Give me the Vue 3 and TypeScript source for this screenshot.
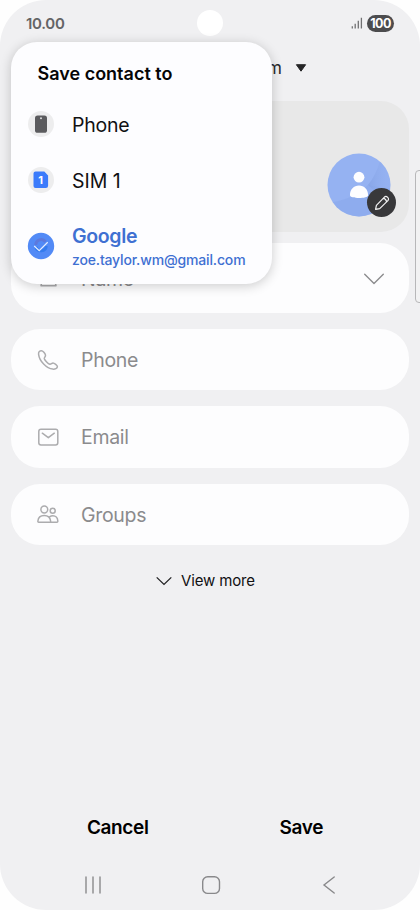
<script setup lang="ts">
interface Field {
  id: 'phone' | 'email' | 'groups'
  label: string
}

interface Target {
  id: 'phone' | 'sim' | 'google'
  label: string
  account?: string
}

const account = 'zoe.taylor.wm@gmail.com'

const targets: Target[] = [
  { id: 'phone', label: 'Phone' },
  { id: 'sim', label: 'SIM 1' },
  { id: 'google', label: 'Google', account },
]

const fields: Field[] = [
  { id: 'phone', label: 'Phone' },
  { id: 'email', label: 'Email' },
  { id: 'groups', label: 'Groups' },
]
</script>

<template>
  <div class="screen">
    <header class="status">
      <span class="time">10.00</span>
      <span class="camera"></span>
      <div class="indicators">
        <svg class="signal" width="12" height="12" viewBox="0 0 12 12">
          <path d="M1.3 9.2v2.3M4.2 6.8v4.7M7.3 3.8v7.7M10.4 .8v10.7" />
        </svg>
        <span class="battery">100</span>
      </div>
    </header>

    <div class="account">
      <span class="account-name">{{ account }}</span>
      <svg width="12" height="8" viewBox="0 0 12 8"><path d="M1.4 .7h9.2L6 7.2z" fill="#252527" stroke="#252527" stroke-linejoin="round" /></svg>
    </div>

    <main class="form">
      <section class="photo">
        <div class="avatar">
          <svg class="portrait" width="64" height="64" viewBox="0 0 64 64">
            <defs>
              <clipPath id="disc"><circle cx="32" cy="32" r="31.5" /></clipPath>
              <linearGradient id="fold" x1="0" y1="0" x2="1" y2="0">
                <stop offset="0" stop-color="#84a2e5" stop-opacity=".75" />
                <stop offset="1" stop-color="#95b2f2" stop-opacity=".2" />
              </linearGradient>
            </defs>
            <g clip-path="url(#disc)">
              <rect width="64" height="64" fill="#95b2f2" />
              <path d="M0 50Q26 47 41 32L64 36V64H0z" fill="#8aa8eb" opacity=".6" />
              <path d="M41 32Q49 22 53 8L64 8V52z" fill="url(#fold)" />
            </g>
            <circle cx="32" cy="24.2" r="5.4" fill="#fdfdff" />
            <path d="M23 42.2c0-5.6 3.8-9.6 9-9.6s9.1 4 9.1 9.6c0 3.7-18.1 3.7-18.1 0z" fill="#fdfdff" />
          </svg>
          <span class="edit">
            <svg width="18" height="18" viewBox="0 0 18 18">
              <path d="M2.6 15.4l.8-4.1 8-8.2a2.1 2.1 0 0 1 3 0l.5.5a2.1 2.1 0 0 1 0 3l-8.2 8zM10.2 4.4q2.8.3 3.4 3.4" />
            </svg>
          </span>
        </div>
      </section>

      <section class="card name">
        <svg class="icon" width="24" height="24" viewBox="0 0 24 24">
          <circle cx="12" cy="7" r="4" />
          <path d="M5 18.7c0-3 3-5 7.5-5s7.5 2 7.5 5z" />
        </svg>
        <span class="label">Name</span>
        <svg class="expand" width="22" height="14" viewBox="0 0 22 14"><path d="M1.7 2.2l9.3 9.3 9.3-9.3" /></svg>
      </section>

      <section v-for="field in fields" :key="field.id" class="card">
        <svg class="icon" width="24" height="24" viewBox="0 0 24 24">
          <path v-if="field.id === 'phone'" d="M5.1 2.8C3.1 3 2.4 4.5 2.6 6.3c.8 6.8 7.9 14.1 14.2 14.8 2.3.2 4.5-.8 4.6-2.5.1-1.2-2.6-3.1-4-3.5-1.4-.4-2.3 1.5-3.5 1.2-1.9-.7-4.9-3.8-5.6-5.6-.3-1.2 1.5-2 1.2-3.5-.4-1.8-2.5-4.6-4.4-4.4z" />
          <template v-else-if="field.id === 'email'">
            <rect x="2.8" y="4.2" width="19" height="15.8" rx="2.2" />
            <path d="M6.3 8.2l6 4.5 6-4.5" />
          </template>
          <template v-else>
            <circle cx="8.3" cy="6.5" r="3.4" />
            <circle cx="16.7" cy="7.8" r="2.5" />
            <path d="M2.7 19.2h11.2c.7 0 .8-.4.7-1.2-.4-3.5-3-5.6-6.4-5.6s-6 2.1-6.3 5.6c-.1.8.1 1.2.8 1.2zM13.5 13.8c1-.7 2.1-1.1 3.4-1.1 2.6 0 4.7 2.1 4.9 5.1.1 1-.2 1.4-.9 1.4h-7" />
          </template>
        </svg>
        <span class="label">{{ field.label }}</span>
      </section>

      <button class="more">
        <svg width="16" height="10" viewBox="0 0 16 10"><path d="M.7 1.4l7.3 7 7.3-7" /></svg>
        <span>View more</span>
      </button>
    </main>

    <footer class="bottom">
      <div class="actions">
        <button class="cancel">Cancel</button>
        <button class="save">Save</button>
      </div>
      <nav class="nav">
        <svg width="20" height="20" viewBox="0 0 20 20"><path d="M3 2v16M10 2v16M17 2v16" /></svg>
        <svg width="20" height="20" viewBox="0 0 20 20"><rect x="1.7" y="1.8" width="16.8" height="16.6" rx="5" /></svg>
        <svg width="20" height="20" viewBox="0 0 20 20"><path d="M15.2 2L5 10l10.2 8" /></svg>
      </nav>
    </footer>

    <span class="edge-handle"></span>

    <div class="menu" role="listbox">
      <h1>Save contact to</h1>
      <div v-for="target in targets" :key="target.id" class="target" :class="target.id">
        <svg width="28" height="28" viewBox="0 0 28 28">
          <template v-if="target.id === 'phone'">
            <circle cx="14" cy="14" r="13" fill="#ededee" />
            <rect x="8" y="5.5" width="12" height="17.3" rx="2.6" fill="#5b5b5e" />
            <circle cx="14" cy="8.2" r="1" fill="#dedee0" />
          </template>
          <template v-else-if="target.id === 'sim'">
            <circle cx="14" cy="14" r="13" fill="#ededee" />
            <path d="M8.5 5.5h8.8l3.8 4v10.3a2.3 2.3 0 0 1-2.3 2.3H8.5a2 2 0 0 1-2-2V7.5a2 2 0 0 1 2-2z" fill="#3b7bfb" />
            <text x="13.6" y="18" class="sim-digit">1</text>
          </template>
          <template v-else>
            <circle cx="14" cy="14" r="13.2" fill="#528af6" />
            <path d="M8.7 13a5.5 5.5 0 0 1 9.8-3.3" fill="none" stroke="#5c79dc" stroke-width="3" />
            <path d="M8.8 15a5.4 5.4 0 0 0 10.5-1" fill="none" stroke="#347bee" stroke-width="3" />
            <path d="M7.2 14l5 4.6 8.5-8.4" fill="none" stroke="#e4edff" stroke-width="1.2" />
          </template>
        </svg>
        <div class="target-text">
          <span class="target-label">{{ target.label }}</span>
          <span v-if="target.account" class="target-account">{{ target.account }}</span>
        </div>
      </div>
    </div>
  </div>
</template>

<style>
body {
  background: #fefefe;
}
</style>

<style scoped>
* {
  box-sizing: border-box;
}

.screen {
  position: relative;
  display: flex;
  flex-direction: column;
  width: 420px;
  height: 910px;
  overflow: hidden;
  border-radius: 46px;
  background: #f0f0f2;
  color: #111113;
  font-family: Inter, Roboto, sans-serif;
}

svg {
  display: block;
  flex: none;
}

button {
  padding: 0;
  border: 0;
  background: none;
  color: inherit;
  font-family: inherit;
}

.status {
  display: grid;
  grid-template-columns: 1fr 26px 1fr;
  align-items: center;
  height: 46px;
  padding: 0 26px;
}

.time {
  color: #646466;
  font-size: 15px;
  font-weight: 600;
  letter-spacing: -0.3px;
}

.camera {
  width: 26px;
  height: 26px;
  border-radius: 50%;
  background: #fff;
}

.indicators {
  display: flex;
  align-items: center;
  justify-content: flex-end;
  gap: 4px;
}

.signal path {
  stroke: #707072;
  stroke-width: 1.3;
}

.battery {
  width: 27px;
  height: 17px;
  border-radius: 9px;
  background: #4c4c4e;
  color: #fff;
  font-size: 12.5px;
  font-weight: 700;
  line-height: 17px;
  text-align: center;
  letter-spacing: -0.5px;
}

.account {
  display: flex;
  align-items: center;
  justify-content: flex-end;
  gap: 13px;
  height: 55px;
  padding: 0 113px 11px 0;
}

.account-name {
  color: #2a2a2c;
  font-size: 17px;
}

.form {
  display: flex;
  flex: 1;
  flex-direction: column;
  padding: 0 11px;
}

.photo {
  display: flex;
  align-items: flex-end;
  justify-content: flex-end;
  height: 131px;
  padding: 0 18px 15px 0;
  border-radius: 28px;
  background: #e8e8e8;
}

.avatar {
  position: relative;
}

.edit {
  position: absolute;
  right: -5px;
  bottom: 0;
  display: flex;
  align-items: center;
  justify-content: center;
  width: 29px;
  height: 29px;
  border-radius: 50%;
  background: #38383a;
}

.edit path {
  fill: none;
  stroke: #f4f4f5;
  stroke-width: 1.2;
  stroke-linejoin: round;
}

.card {
  display: flex;
  align-items: center;
  height: 61.5px;
  margin-top: 16px;
  padding: 1px 24px 0 25px;
  border-radius: 29px;
  background: #fdfdfe;
}

.card.name {
  height: 70px;
  margin-top: 11px;
}

.card.name + .card {
  margin-top: 15.5px;
}

.icon {
  margin-right: 21px;
}

.icon * {
  fill: none;
  stroke: #acacae;
  stroke-width: 1.5;
  stroke-linecap: round;
  stroke-linejoin: round;
}

.label {
  flex: 1;
  color: #8b8b8d;
  font-size: 19.5px;
  letter-spacing: -0.3px;
}

.expand path {
  fill: none;
  stroke: #8c8c8e;
  stroke-width: 1.4;
  stroke-linecap: round;
  stroke-linejoin: round;
}

.more {
  display: flex;
  align-items: center;
  align-self: center;
  gap: 9px;
  height: 20px;
  margin-top: 25.5px;
  margin-right: 9px;
  font-size: 15px;
  letter-spacing: -0.15px;
}

.more path {
  fill: none;
  stroke: #222224;
  stroke-width: 1.3;
}

.bottom {
  height: 108px;
}

.actions {
  display: grid;
  grid-template-columns: 1fr 1fr;
  height: 50px;
  padding: 0 27px 0 26px;
}

.actions button {
  color: #000;
  font-size: 19px;
  font-weight: 600;
  letter-spacing: -0.35px;
}

.nav {
  display: grid;
  grid-template-columns: repeat(3, 118px);
  justify-content: center;
  justify-items: center;
  padding: 22.5px 0 0 1px;
}

.nav * {
  fill: none;
  stroke: #89898b;
  stroke-width: 1.4;
  stroke-linecap: round;
}

.edge-handle {
  position: absolute;
  top: 170px;
  right: -5px;
  width: 10px;
  height: 133px;
  border: 1px solid #b7b7b9;
  border-radius: 4px;
  background: #f2f2f3;
}

.menu {
  position: absolute;
  top: 42px;
  left: 11px;
  width: 261px;
  height: 242px;
  padding: 19px 16px 0;
  border-radius: 26px;
  background: #fdfdff;
  box-shadow: 0 2px 12px rgb(0 0 0 / 20%);
}

h1 {
  margin: 0 0 0 10.5px;
  color: #050506;
  font-size: 18px;
  font-weight: 600;
  line-height: 25px;
}

.target {
  display: flex;
  align-items: center;
  gap: 17px;
  height: 56px;
}

.target.phone {
  margin-top: 10px;
}

.target.google {
  height: 75px;
  color: #3f70d2;
}

.target-text {
  display: flex;
  flex-direction: column;
  padding-top: 1px;
}

.target-label {
  font-size: 19.5px;
  line-height: 26px;
  letter-spacing: -0.25px;
}

.sim .target-label {
  letter-spacing: 0;
}

.google .target-label {
  font-weight: 600;
  letter-spacing: -0.35px;
}

.target-account {
  font-size: 14px;
  font-weight: 500;
  line-height: 21px;
  letter-spacing: -0.16px;
}

.sim-digit {
  fill: #fff;
  font-size: 11px;
  font-weight: 700;
  text-anchor: middle;
}
</style>
